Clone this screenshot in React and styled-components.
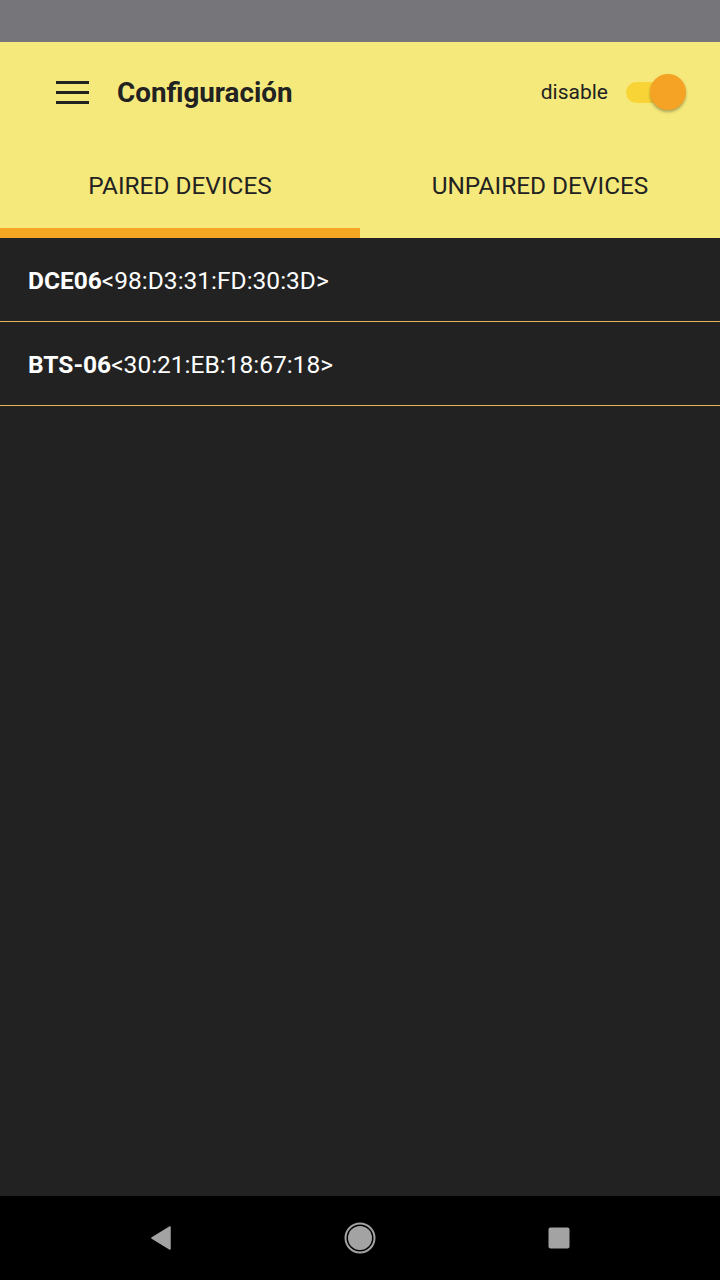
import React from "react";
import styled, { createGlobalStyle } from "styled-components";

const Global = createGlobalStyle`
  html, body { margin: 0; padding: 0; background: #222222; }
  body { font-family: Roboto, "Noto Sans", sans-serif; }
  * { box-sizing: border-box; }
`;

const Screen = styled.div`
  width: 720px;
  height: 1280px;
  display: flex;
  flex-direction: column;
  background: #222222;
  overflow: hidden;
`;

const StatusBar = styled.div`
  height: 42px;
  background: #767579;
  flex-shrink: 0;
`;

const AppBar = styled.header`
  background: #f6e97b;
  display: flex;
  flex-direction: column;
  flex-shrink: 0;
`;

const Toolbar = styled.div`
  height: 100px;
  display: flex;
  align-items: center;
  padding: 0 34px 0 56px;
`;

const Hamburger = styled.div`
  width: 33px;
  height: 23px;
  display: flex;
  flex-direction: column;
  justify-content: space-between;
  margin-right: 28px;
  & > span {
    display: block;
    height: 3px;
    background: #222222;
  }
`;

const Title = styled.h1`
  margin: 0;
  font-size: 27.8px;
  font-weight: 700;
  color: #222222;
  flex: 1;
`;

const SwitchLabel = styled.span`
  font-size: 21px;
  color: #222222;
  margin-right: 18px;
`;

const Switch = styled.div`
  position: relative;
  width: 60px;
  height: 36px;
  display: flex;
  align-items: center;
`;

const Track = styled.div`
  width: 48px;
  height: 21px;
  border-radius: 11px;
  background: #f9d437;
`;

const Thumb = styled.div`
  position: absolute;
  right: 0;
  top: 0;
  width: 36px;
  height: 36px;
  border-radius: 50%;
  background: #f5a324;
  box-shadow: 0 2px 3px rgba(0, 0, 0, 0.3);
`;

const Tabs = styled.div`
  display: grid;
  grid-template-columns: 1fr 1fr;
  height: 96px;
`;

const Tab = styled.div`
  display: flex;
  align-items: center;
  justify-content: center;
  font-size: 24.4px;
  color: #222222;
  text-transform: uppercase;
  border-bottom: 10px solid ${(p) => (p.$active ? "#f5a623" : "transparent")};
`;

const List = styled.main`
  flex: 1;
  display: flex;
  flex-direction: column;
`;

const Row = styled.div`
  height: 84px;
  display: flex;
  align-items: center;
  padding: 2px 28px 0;
  border-bottom: 1px solid #e8b45a;
  font-size: 24.5px;
  color: #ffffff;
`;

const Name = styled.b`
  font-weight: 700;
`;

const NavBar = styled.nav`
  height: 84px;
  background: #000000;
  display: flex;
  align-items: center;
  justify-content: center;
  gap: 171px;
  flex-shrink: 0;
`;

const NavButton = styled.div`
  display: flex;
  align-items: center;
  justify-content: center;
`;

const devices = [
  { name: "DCE06", mac: "<98:D3:31:FD:30:3D>" },
  { name: "BTS-06", mac: "<30:21:EB:18:67:18>" },
];

export default function App() {
  return (
    <Screen>
      <Global />
      <StatusBar />
      <AppBar>
        <Toolbar>
          <Hamburger>
            <span />
            <span />
            <span />
          </Hamburger>
          <Title>Configuración</Title>
          <SwitchLabel>disable</SwitchLabel>
          <Switch>
            <Track />
            <Thumb />
          </Switch>
        </Toolbar>
        <Tabs>
          <Tab $active>Paired Devices</Tab>
          <Tab>Unpaired Devices</Tab>
        </Tabs>
      </AppBar>
      <List>
        {devices.map((d) => (
          <Row key={d.name}>
            <Name>{d.name}</Name>
            {d.mac}
          </Row>
        ))}
      </List>
      <NavBar>
        <NavButton>
          <svg width="22" height="24" viewBox="0 0 22 24">
            <path d="M20 1 L20 23 L2 12 Z" fill="#a3a3a3" stroke="#a3a3a3" strokeWidth="1.5" strokeLinejoin="round" />
          </svg>
        </NavButton>
        <NavButton>
          <svg width="34" height="34" viewBox="0 0 34 34">
            <circle cx="17" cy="17" r="14.5" fill="none" stroke="#a3a3a3" strokeWidth="2" />
            <circle cx="17" cy="17" r="12" fill="#a3a3a3" />
          </svg>
        </NavButton>
        <NavButton>
          <svg width="22" height="22" viewBox="0 0 22 22">
            <rect x="0.5" y="0.5" width="21" height="21" rx="2" fill="#a3a3a3" />
          </svg>
        </NavButton>
      </NavBar>
    </Screen>
  );
}
